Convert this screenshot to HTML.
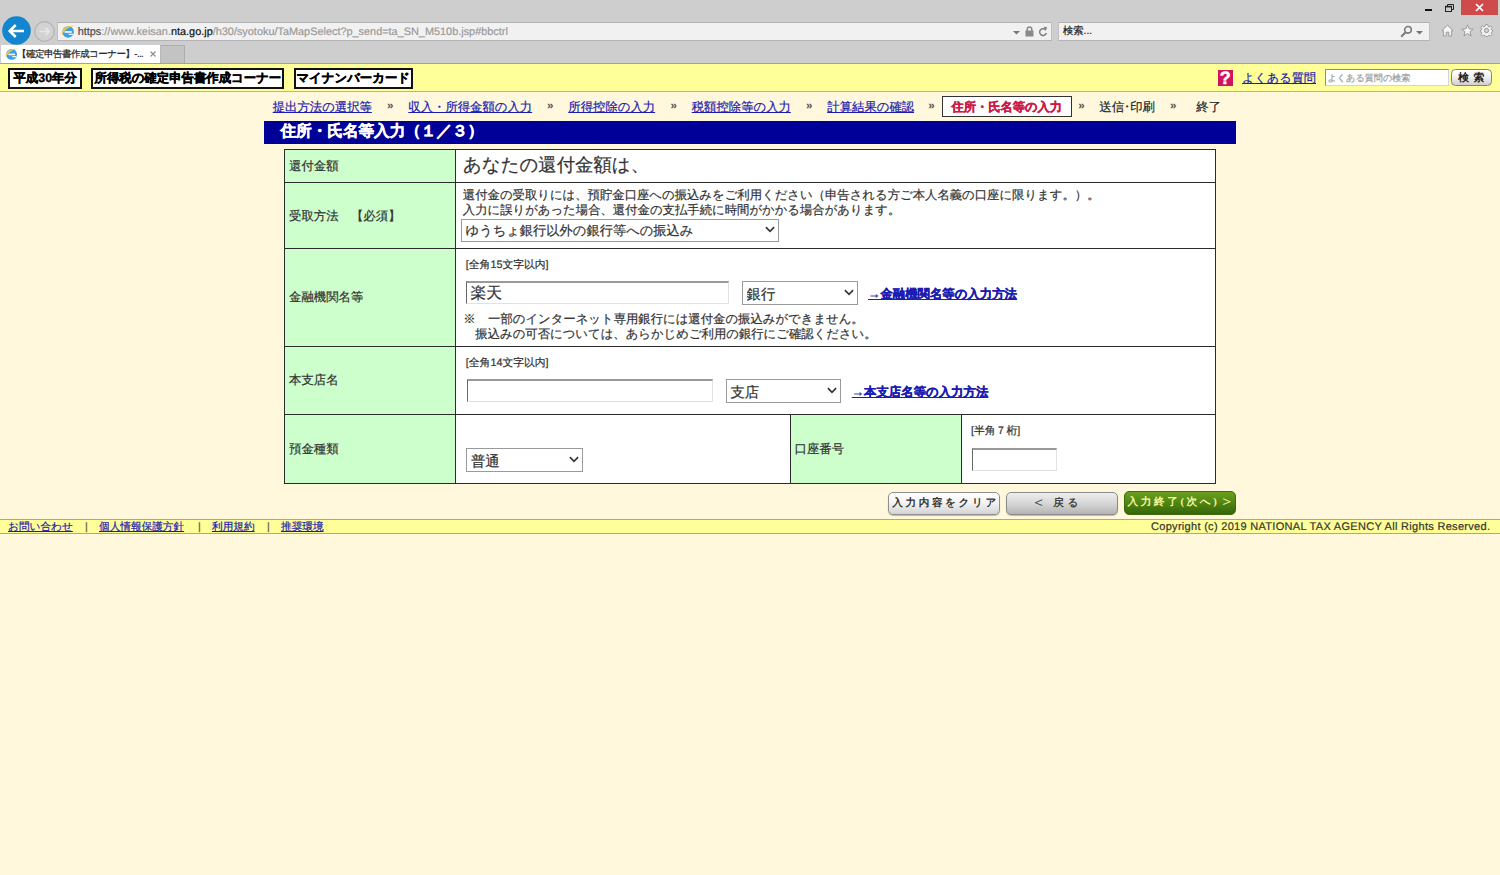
<!DOCTYPE html>
<html lang="ja">
<head>
<meta charset="utf-8">
<title>【確定申告書作成コーナー】-住所・氏名等入力</title>
<style>
*{box-sizing:border-box;margin:0;padding:0}
html,body{width:1500px;height:875px;overflow:hidden}
body{position:relative;text-rendering:geometricPrecision;-webkit-text-stroke:0.2px;background:#fff8dc;font-family:"Liberation Sans",sans-serif;font-size:12.4px;color:#333;line-height:1}
.abs{position:absolute;white-space:nowrap}
a{color:#1c1cb0;text-decoration:underline}
/* ---------- browser chrome ---------- */
#chrome{position:absolute;left:0;top:0;width:1500px;height:63px;background:#cecece}
#chromeline{position:absolute;left:0;top:63px;width:1500px;height:1px;background:#a3a39a}
.bar{position:absolute;top:22px;height:19px;background:#f1f1f1;border:1px solid #b4b4b4;border-left-color:#c0c0c0;border-right-color:#c0c0c0}
#url{left:77.7px;top:26px;height:12px;line-height:12px;font-size:10.9px;color:#9a9a9a}
#url b{font-weight:normal;color:#111}
#url i{font-style:normal;color:#4a4a4a}
#tab{position:absolute;left:1px;top:45px;width:160px;height:18px;background:#fff;border-right:1px solid #b8b8b8}
#newtab{position:absolute;left:161px;top:45px;width:24px;height:18px;background:#c3c3c3;border:1px solid #adadad;border-left:none;border-bottom:none}
#tabtitle{left:17px;top:48.7px;font-size:9.6px;height:11px;line-height:11px;color:#222;width:130px;overflow:hidden;letter-spacing:-0.6px}
#closebtn{position:absolute;left:1461px;top:0;width:37px;height:15px;background:#cf4a4a}
/* ---------- page ---------- */
#ybar{position:absolute;left:0;top:64px;width:1500px;height:28px;background:#ffff99;border-bottom:1px solid #b9b974}
.hbox{-webkit-text-stroke:0.35px #000;position:absolute;top:67.5px;height:21.5px;border:2px solid #111;background:#fff;color:#000;font-weight:bold;font-size:12.4px;line-height:17px;text-align:center;white-space:nowrap;overflow:hidden}
.nav{position:absolute;top:99.5px;height:15px;line-height:15px;font-size:12.36px;white-space:nowrap}
.sep{position:absolute;top:99.5px;height:13px;line-height:13px;font-size:11.5px;color:#555;white-space:nowrap;font-weight:bold;-webkit-text-stroke:0}
#navbox{position:absolute;left:942px;top:96px;width:130px;height:20.5px;border:1px solid #333;background:#fff}
#title{-webkit-text-stroke:0.4px #fff;position:absolute;left:264px;top:121px;width:972px;height:23px;background:#000099;color:#fff;font-weight:bold;font-size:15.6px;line-height:22px;padding-left:16.5px;white-space:nowrap}
/* table */
.cell{position:absolute;border:1px solid #2b2b2b}
.g{background:#ccffcc}
.w{background:#fff}
.lbl{position:absolute;left:289px;font-size:12.4px;height:14px;line-height:14px;color:#333;white-space:nowrap}
.txt{position:absolute;font-size:12.36px;height:14px;line-height:14px;color:#333;white-space:nowrap}
.small{position:absolute;margin-top:-0.5px;font-size:10.8px;height:12px;line-height:12px;color:#333;white-space:nowrap}
input.inp{position:absolute;text-rendering:geometricPrecision;border:1px solid #e2e2e2;border-top:2px solid #999;border-left:1px solid #686868;background:#fff;font-family:"Liberation Sans",sans-serif;font-size:15.8px;color:#333;padding:0 3px;outline:none;border-radius:0}
.sel{position:absolute;border:1px solid #9a9a9a;background:#fff;overflow:hidden}
.sel select{text-rendering:geometricPrecision;position:absolute;left:0;top:0;width:100%;height:100%;border:none;background:transparent;-webkit-appearance:none;appearance:none;font-family:"Liberation Sans",sans-serif;color:#333;padding:0 0 0 3.6px;outline:none}
.sel svg{position:absolute;right:3px;top:50%;margin-top:-4.3px}
/* buttons */
.btn{-webkit-text-stroke:0;position:absolute;top:491.5px;height:23px;border-radius:5px;font-family:"Liberation Serif",serif;font-weight:bold;font-size:10.6px;line-height:21px;text-align:center;white-space:nowrap;letter-spacing:2.6px;padding-left:2.6px;overflow:hidden}
#fbar{position:absolute;left:0;top:519px;width:1500px;height:15px;background:#ffff99;border-top:1px solid #a9a98c;border-bottom:1px solid #a9a98c}
.flink{position:absolute;top:521px;height:12px;line-height:12px;font-size:10.65px;white-space:nowrap}
</style>
</head>
<body>
<!-- ================= Browser chrome ================= -->
<div id="chrome"></div>
<div id="chromeline"></div>
<!-- window controls -->
<div class="abs" style="left:1425px;top:8.5px;width:7px;height:2px;background:#111"></div>
<svg class="abs" style="left:1445px;top:3.5px" width="9" height="8" viewBox="0 0 9 8"><path d="M2.5 2V0.5H8.5V5.5H6.8" fill="none" stroke="#222" stroke-width="1"/><rect x="0.5" y="2.3" width="6" height="5.2" fill="none" stroke="#222" stroke-width="1"/><path d="M0.5 2.8H6.5" stroke="#222" stroke-width="1.3"/></svg>
<div id="closebtn"></div>
<svg class="abs" style="left:1475px;top:3px" width="9" height="9" viewBox="0 0 9 9"><path d="M1 1L8 8M8 1L1 8" stroke="#fff" stroke-width="1.7"/></svg>
<!-- back / forward -->
<svg class="abs" style="left:1px;top:15px" width="31" height="31" viewBox="0 0 31 31"><circle cx="15.5" cy="15.5" r="14.3" fill="#1287d0"/><path d="M23 16H9.2M14.7 10L8.7 16L14.7 22" fill="none" stroke="#fff" stroke-width="2.6" stroke-linecap="butt" stroke-linejoin="miter"/></svg>
<svg class="abs" style="left:33px;top:20px" width="23" height="23" viewBox="0 0 23 23"><circle cx="11.5" cy="11.5" r="9.8" fill="#d2d2d2" stroke="#b2b2b2" stroke-width="1.2"/><path d="M6.5 11.5H16M12.5 7.8L16.2 11.5L12.5 15.2" fill="none" stroke="#e8e8e8" stroke-width="1.6"/></svg>
<!-- address bar -->
<div class="bar" style="left:57px;width:995px"></div>
<svg class="abs" style="left:61px;top:23.6px" width="14" height="15.1" viewBox="0 0 13 14"><circle cx="6.6" cy="7.4" r="5.4" fill="#3f9fdc"/><path d="M3.4 7.4H10" stroke="#eaf5fc" stroke-width="1.7"/><path d="M7.2 9.6H11.4" stroke="#eaf5fc" stroke-width="1.2"/><path d="M0.9 10.6C-0.8 5.2 5.6 0.6 12.6 1.9C8.6 2 2.8 5 0.9 10.6Z" fill="#ecc94e"/></svg>
<div id="url" class="abs"><i>https</i>://www.keisan.<b>nta.go.jp</b>/h30/syotoku/TaMapSelect?p_send=ta_SN_M510b.jsp#bbctrl</div>
<svg class="abs" style="left:1013px;top:31px" width="7" height="4" viewBox="0 0 7 4"><path d="M0 0H7L3.5 3.6Z" fill="#777"/></svg>
<svg class="abs" style="left:1025px;top:26px" width="9" height="11" viewBox="0 0 9 11"><path d="M2.2 5V3.2A2.3 2.3 0 0 1 6.8 3.2V5" fill="none" stroke="#8a8a8a" stroke-width="1.5"/><rect x="0.5" y="4.6" width="8" height="5.9" rx="0.6" fill="#8a8a8a"/></svg>
<svg class="abs" style="left:1038px;top:26px" width="10" height="11" viewBox="0 0 10 11"><path d="M7.9 4.2A3.4 3.4 0 1 0 8.3 7" fill="none" stroke="#808080" stroke-width="1.5"/><path d="M5.8 0.6L9.4 1.6L7.2 4.8Z" fill="#808080"/></svg>
<!-- search box -->
<div class="bar" style="left:1058px;width:372px"></div>
<div class="abs" style="left:1063px;top:26px;font-size:10.3px;height:12px;line-height:12px;color:#222">検索...</div>
<svg class="abs" style="left:1400px;top:25px" width="13" height="13" viewBox="0 0 13 13"><circle cx="8" cy="4.8" r="3.3" fill="none" stroke="#7a7a7a" stroke-width="1.6"/><path d="M5.6 7.2L1.2 11.8" stroke="#7a7a7a" stroke-width="2"/></svg>
<svg class="abs" style="left:1416px;top:31px" width="7" height="4" viewBox="0 0 7 4"><path d="M0 0H7L3.5 3.6Z" fill="#777"/></svg>
<!-- home / star / gear -->
<svg class="abs" style="left:1441px;top:24px" width="13" height="13" viewBox="0 0 13 13"><path d="M6.5 1.2L0.8 6.6H2.4V12H5.2V8.2H7.8V12H10.6V6.6H12.2Z" fill="#f4f4f4" stroke="#9c9c9c" stroke-width="1"/></svg>
<svg class="abs" style="left:1461px;top:24px" width="13" height="13" viewBox="0 0 13 13"><path d="M6.5 0.9L8.1 4.9L12.3 5.1L9 7.8L10.1 12L6.5 9.6L2.9 12L4 7.8L0.7 5.1L4.9 4.9Z" fill="#f4f4f4" stroke="#9c9c9c" stroke-width="1"/></svg>
<svg class="abs" style="left:1480px;top:24px" width="13" height="13" viewBox="0 0 13 13"><g fill="#f4f4f4" stroke="#9c9c9c" stroke-width="1"><path d="M5.3 0.6H7.7L8 2.3L9.3 2.9L10.7 1.9L12.1 3.3L11.1 4.7L11.7 6L12.4 6.2V7.8L11.7 8L11.1 9.3L12.1 10.7L10.7 12.1L9.3 11.1L8 11.7L7.7 12.4H5.3L5 11.7L3.7 11.1L2.3 12.1L0.9 10.7L1.9 9.3L1.3 8L0.6 7.8V6.2L1.3 6L1.9 4.7L0.9 3.3L2.3 1.9L3.7 2.9L5 2.3Z"/><circle cx="6.5" cy="6.5" r="2.2" fill="#cecece"/></g></svg>
<!-- tab -->
<div id="tab"></div>
<div id="newtab"></div>
<svg class="abs" style="left:5px;top:47px" width="13" height="14" viewBox="0 0 13 14"><circle cx="6.6" cy="7.4" r="5.4" fill="#3f9fdc"/><path d="M3.4 7.4H10" stroke="#eaf5fc" stroke-width="1.7"/><path d="M7.2 9.6H11.4" stroke="#eaf5fc" stroke-width="1.2"/><path d="M0.9 10.6C-0.8 5.2 5.6 0.6 12.6 1.9C8.6 2 2.8 5 0.9 10.6Z" fill="#ecc94e"/></svg>
<div id="tabtitle" class="abs">【確定申告書作成コーナー】-...</div>
<svg class="abs" style="left:150px;top:50.5px" width="6" height="6" viewBox="0 0 6 6"><path d="M0.5 0.5L5.5 5.5M5.5 0.5L0.5 5.5" stroke="#8a8a8a" stroke-width="1.1"/></svg>

<!-- ================= Page header ================= -->
<div id="ybar"></div>
<div class="hbox" style="left:8.3px;width:73.7px">平成30年分</div>
<div class="hbox" style="left:91.3px;width:193.2px">所得税の確定申告書作成コーナー</div>
<div class="hbox" style="left:293.6px;width:119.2px">マイナンバーカード</div>
<div class="abs" style="left:1217.6px;top:70px;width:15.5px;height:15.6px;background:#d0125f;color:#fff;font-weight:bold;font-size:18px;line-height:16.5px;text-align:center;-webkit-text-stroke:0.5px #fff;overflow:hidden">?</div>
<a class="abs" style="left:1242px;top:70.5px;font-size:12.15px;height:14px;line-height:14px">よくある質問</a>
<input class="inp" style="left:1324.5px;top:69px;width:124.5px;height:17px;font-size:9.1px;color:#9a9a9a;border-color:#d4d4d4;border-top:1px solid #8c8c8c;border-left:1px solid #8c8c8c;padding:1.6px 2px 0 2px" value="よくある質問の検索">
<div class="abs" style="left:1451px;top:69px;width:40.5px;height:17px;border:1px solid #85856a;-webkit-text-stroke:0;border-radius:4.5px;background:linear-gradient(#ffffff,#f2f2f2 45%,#cfcfcf);font-family:'Liberation Serif',serif;font-weight:bold;font-size:10.8px;line-height:17.2px;text-align:center;color:#222;letter-spacing:4.6px;padding-left:4.6px">検索</div>

<!-- ================= Breadcrumb nav ================= -->
<a class="nav" style="left:272.7px">提出方法の選択等</a>
<span class="sep" style="left:387px">»</span>
<a class="nav" style="left:408.3px">収入・所得金額の入力</a>
<span class="sep" style="left:547px">»</span>
<a class="nav" style="left:568.3px">所得控除の入力</a>
<span class="sep" style="left:670.5px">»</span>
<a class="nav" style="left:691.7px">税額控除等の入力</a>
<span class="sep" style="left:806px">»</span>
<a class="nav" style="left:827.3px">計算結果の確認</a>
<span class="sep" style="left:928.3px">»</span>
<div id="navbox"></div>
<span class="nav" style="left:951.5px;color:#cc1a48;-webkit-text-stroke:0.3px #cc1a48;font-weight:bold;font-size:12.25px">住所・氏名等の入力</span>
<span class="sep" style="left:1078.3px">»</span>
<span class="nav" style="left:1099.3px;color:#222">送信･印刷</span>
<span class="sep" style="left:1170px">»</span>
<span class="nav" style="left:1196.3px;color:#222">終了</span>

<!-- ================= Title bar ================= -->
<div id="title">住所・氏名等入力（１／３）</div>

<!-- ================= Form table ================= -->
<div id="tablebg" style="position:absolute;left:284px;top:149px;width:932px;height:334.5px;background:#2b2b2b"></div>
<!-- row 1 -->
<div class="cell g" style="left:284px;top:149px;width:172px;height:34px"></div>
<div class="cell w" style="left:455px;top:149px;width:761px;height:34px"></div>
<div class="lbl" style="top:158.5px">還付金額</div>
<div class="txt" style="left:463px;top:153.5px;font-size:18.4px;height:22px;line-height:22px">あなたの還付金額は、</div>
<!-- row 2 -->
<div class="cell g" style="left:284px;top:182px;width:172px;height:66.5px"></div>
<div class="cell w" style="left:455px;top:182px;width:761px;height:66.5px"></div>
<div class="lbl" style="top:208.5px">受取方法　【必須】</div>
<div class="txt" style="left:462.8px;top:188.3px">還付金の受取りには、預貯金口座への振込みをご利用ください（申告される方ご本人名義の口座に限ります。）。</div>
<div class="txt" style="left:462.8px;top:203.2px">入力に誤りがあった場合、還付金の支払手続に時間がかかる場合があります。</div>
<div class="sel" style="left:461px;top:219px;width:317.5px;height:23px"><select style="font-size:13.25px"><option>ゆうちょ銀行以外の銀行等への振込み</option></select><svg width="10" height="7" viewBox="0 0 10 7"><path d="M0.9 1.1L5 5.4L9.1 1.1" fill="none" stroke="#333" stroke-width="1.6"/></svg></div>
<!-- row 3 -->
<div class="cell g" style="left:284px;top:247.5px;width:172px;height:99px"></div>
<div class="cell w" style="left:455px;top:247.5px;width:761px;height:99px"></div>
<div class="lbl" style="top:290px">金融機関名等</div>
<div class="small" style="left:465.8px;top:259.3px">[全角15文字以内]</div>
<input class="inp" style="left:466.4px;top:281px;width:263px;height:23px" value="楽天">
<div class="sel" style="left:742px;top:281px;width:116px;height:24px"><select style="font-size:14.4px;padding-top:3.4px"><option>銀行</option></select><svg width="10" height="7" viewBox="0 0 10 7"><path d="M0.9 1.1L5 5.4L9.1 1.1" fill="none" stroke="#333" stroke-width="1.6"/></svg></div>
<a class="txt" style="left:868px;top:287px;font-weight:bold;color:#1c1cb0;-webkit-text-stroke:0.3px #1c1cb0;font-size:12.4px">→金融機関名等の入力方法</a>
<div class="txt" style="left:463.3px;top:311.8px">※　一部のインターネット専用銀行には還付金の振込みができません。</div>
<div class="txt" style="left:475.3px;top:327.2px">振込みの可否については、あらかじめご利用の銀行にご確認ください。</div>
<!-- row 4 -->
<div class="cell g" style="left:284px;top:345.5px;width:172px;height:69.5px"></div>
<div class="cell w" style="left:455px;top:345.5px;width:761px;height:69.5px"></div>
<div class="lbl" style="top:373px">本支店名</div>
<div class="small" style="left:465.8px;top:357px">[全角14文字以内]</div>
<input class="inp" style="left:466.8px;top:379px;width:246.3px;height:23px" value="">
<div class="sel" style="left:725.8px;top:379px;width:115.5px;height:24px"><select style="font-size:14.4px;padding-top:3.4px"><option>支店</option></select><svg width="10" height="7" viewBox="0 0 10 7"><path d="M0.9 1.1L5 5.4L9.1 1.1" fill="none" stroke="#333" stroke-width="1.6"/></svg></div>
<a class="txt" style="left:851.7px;top:385px;font-weight:bold;color:#1c1cb0;-webkit-text-stroke:0.3px #1c1cb0;font-size:12.4px">→本支店名等の入力方法</a>
<!-- row 5 -->
<div class="cell g" style="left:284px;top:414px;width:172px;height:69.5px"></div>
<div class="cell w" style="left:455px;top:414px;width:336px;height:69.5px"></div>
<div class="cell g" style="left:790px;top:414px;width:172px;height:69.5px"></div>
<div class="cell w" style="left:961px;top:414px;width:255px;height:69.5px"></div>
<div class="lbl" style="top:441.8px">預金種類</div>
<div class="sel" style="left:466.3px;top:448px;width:116.3px;height:24.3px"><select style="font-size:14.4px;padding-top:3.4px"><option>普通</option></select><svg width="10" height="7" viewBox="0 0 10 7"><path d="M0.9 1.1L5 5.4L9.1 1.1" fill="none" stroke="#333" stroke-width="1.6"/></svg></div>
<div class="lbl" style="left:794.5px;top:441.8px">口座番号</div>
<div class="small" style="left:971px;top:425px">[半角７桁]</div>
<input class="inp" style="left:972.2px;top:447.7px;width:84.8px;height:23px" value="">

<!-- ================= Buttons ================= -->
<div class="btn" style="left:888.4px;width:111.8px;border:1px solid #8f8f8f;background:linear-gradient(#ffffff,#f4f4f4 45%,#d4d4d4);color:#333;box-shadow:0 1px 1px rgba(0,0,0,.25)">入力内容をクリア</div>
<div class="btn" style="left:1006px;width:111.8px;border:1px solid #8a8a8a;background:linear-gradient(#eeeeee,#d6d6d6 50%,#b4b4b4);color:#444;box-shadow:0 1px 1px rgba(0,0,0,.25);letter-spacing:3.6px;padding-left:0;padding-right:11px"><span style="font-size:15px;font-weight:normal;letter-spacing:1px;vertical-align:-1px;line-height:10px">＜</span> 戻る</div>
<div class="btn" style="left:1123.5px;width:112.3px;top:491px;height:24px;border:1px solid #3f6b0c;background:linear-gradient(#6a9f1e,#4f8512 50%,#36650a);color:#f4f7a0;line-height:22px;letter-spacing:2.6px;padding-left:2.6px">入力終了(次へ)<span style="font-size:15px;font-weight:normal;letter-spacing:0;vertical-align:-1px;line-height:10px">＞</span></div>

<!-- ================= Footer ================= -->
<div id="fbar"></div>
<a class="flink" style="left:8px">お問い合わせ</a>
<span class="flink" style="left:85px;color:#555">|</span>
<a class="flink" style="left:99px">個人情報保護方針</a>
<span class="flink" style="left:198px;color:#555">|</span>
<a class="flink" style="left:212px">利用規約</a>
<span class="flink" style="left:267px;color:#555">|</span>
<a class="flink" style="left:281px">推奨環境</a>
<span class="flink" style="left:1151px;color:#333;font-size:11px;letter-spacing:0.3px;margin-top:0">Copyright (c) 2019 NATIONAL TAX AGENCY All Rights Reserved.</span>
</body>
</html>
